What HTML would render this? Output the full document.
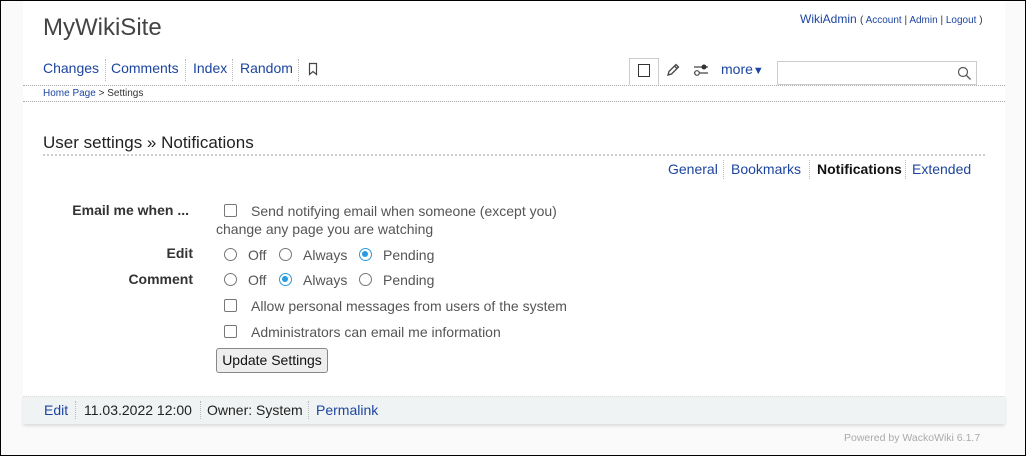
<!DOCTYPE html>
<html><head><meta charset="utf-8"><style>
*{margin:0;padding:0;box-sizing:border-box}
html,body{width:1026px;height:456px;overflow:hidden}
body{background:#fafafa;font-family:"Liberation Sans",Arial,sans-serif;position:relative;border:1px solid #000}
.a{position:absolute;white-space:nowrap}
.l{color:#1d45a0}
.panel{position:absolute;left:22px;top:0;width:982px;height:396px;background:#fff}
.foot{position:absolute;left:22px;top:395px;width:982px;height:28px;background:#f0f3f3;box-shadow:0 2px 3px rgba(0,0,0,.12);border-top:1px dotted #ddd}
.hd{position:absolute;left:22px;width:982px;border-top:1px dotted #aaa}
.sep{position:absolute;border-left:1px dotted #bbb}
.cb{position:absolute;width:13px;height:13px;border:1.5px solid #777;border-radius:2px;background:#fff}
.rb{position:absolute;width:13px;height:13px;border:1.5px solid #777;border-radius:50%;background:#fff}
.rb.on{border-color:#2a9ae0}
.rb.on:after{content:"";position:absolute;left:2px;top:2px;width:6px;height:6px;border-radius:50%;background:#2a9ae0}
.t{font-size:14px;color:#555}
.lab{font-size:14px;color:#333;font-weight:bold;text-align:right;width:150px}
</style></head><body>
<div class="panel"></div>
<div class="foot"></div>
<div class="a" style="left:42px;top:13px;font-size:24px;color:#444">MyWikiSite</div>
<div class="a" style="left:799px;top:11px;font-size:12px;color:#333"><span class="l">WikiAdmin</span> <span style="font-size:10px">( <span class="l">Account</span> | <span class="l">Admin</span> | <span class="l">Logout</span> )</span></div>
<div class="a l" style="left:42px;top:59px;font-size:14px">Changes</div>
<div class="sep" style="left:104px;top:58px;height:22px"></div>
<div class="a l" style="left:110px;top:59px;font-size:14px">Comments</div>
<div class="sep" style="left:184px;top:58px;height:22px"></div>
<div class="a l" style="left:192px;top:59px;font-size:14px">Index</div>
<div class="sep" style="left:231px;top:58px;height:22px"></div>
<div class="a l" style="left:239px;top:59px;font-size:14px">Random</div>
<div class="sep" style="left:297px;top:58px;height:22px"></div>
<svg class="a" style="left:306px;top:61px" width="12" height="14"><path d="M2.5 1.5h7v11l-3.5-3-3.5 3z" fill="none" stroke="#444" stroke-width="1.2"/></svg>
<div class="a" style="left:628px;top:57px;width:30px;height:27px;border:1px solid #ccc;border-bottom:none;background:#fff"></div>
<div class="a" style="left:637px;top:63px;width:12px;height:13px;border:1.3px solid #333"></div>
<svg class="a" style="left:664px;top:61px" width="16" height="16"><path d="M3 13l1-3.5 7-7 2.5 2.5-7 7z M9.5 4l2.5 2.5" fill="none" stroke="#444" stroke-width="1.3"/></svg>
<svg class="a" style="left:691px;top:61px" width="18" height="16"><path d="M2 5h14M2 11h14" stroke="#444" stroke-width="1.3"/><circle cx="12" cy="5" r="2.5" fill="#333"/><circle cx="5" cy="11" r="2.3" fill="#fff" stroke="#444" stroke-width="1.2"/></svg>
<div class="a l" style="left:720px;top:60px;font-size:14px">more<span style="font-size:11px">▼</span></div>
<div class="a" style="left:776px;top:60px;width:200px;height:24px;border:1px solid #ccc;background:#fff"></div>
<svg class="a" style="left:956px;top:65px" width="15" height="15"><circle cx="6" cy="6" r="4.5" fill="none" stroke="#555" stroke-width="1.2"/><path d="M9.5 9.5l4 4" stroke="#555" stroke-width="1.3"/></svg>
<div class="hd" style="top:84px"></div>
<div class="a" style="left:42px;top:87px;font-size:10px;color:#333"><span class="l">Home Page</span> &gt; Settings</div>
<div class="hd" style="top:100px"></div>
<div class="a" style="left:42px;top:132px;font-size:17px;color:#222">User settings » Notifications</div>
<div class="a" style="left:42px;top:153px;width:942px;border-top:2px dotted #ccc"></div>
<div class="a l" style="left:667px;top:160px;font-size:14px">General</div>
<div class="sep" style="left:722px;top:159px;height:19px"></div>
<div class="a l" style="left:730px;top:160px;font-size:14px">Bookmarks</div>
<div class="sep" style="left:808px;top:159px;height:19px"></div>
<div class="a" style="left:816px;top:160px;font-size:14px;font-weight:bold;color:#111">Notifications</div>
<div class="sep" style="left:904px;top:159px;height:19px"></div>
<div class="a l" style="left:911px;top:160px;font-size:14px">Extended</div>

<div class="a lab" style="left:38px;top:201px">Email me when ...</div>
<div class="cb" style="left:223px;top:203px"></div>
<div class="a t" style="left:250px;top:202px">Send notifying email when someone (except you)</div>
<div class="a t" style="left:215px;top:220px">change any page you are watching</div>
<div class="a lab" style="left:42px;top:244px">Edit</div>
<div class="rb" style="left:223px;top:247px"></div><div class="a t" style="left:247px;top:246px">Off</div>
<div class="rb" style="left:278px;top:247px"></div><div class="a t" style="left:302px;top:246px">Always</div>
<div class="rb on" style="left:358px;top:247px"></div><div class="a t" style="left:382px;top:246px">Pending</div>
<div class="a lab" style="left:42px;top:270px">Comment</div>
<div class="rb" style="left:223px;top:272px"></div><div class="a t" style="left:247px;top:271px">Off</div>
<div class="rb on" style="left:278px;top:272px"></div><div class="a t" style="left:302px;top:271px">Always</div>
<div class="rb" style="left:358px;top:272px"></div><div class="a t" style="left:382px;top:271px">Pending</div>
<div class="cb" style="left:223px;top:298px"></div>
<div class="a t" style="left:250px;top:297px">Allow personal messages from users of the system</div>
<div class="cb" style="left:223px;top:324px"></div>
<div class="a t" style="left:250px;top:323px">Administrators can email me information</div>
<div class="a" style="left:215px;top:347px;width:112px;height:25px;border:1px solid #888;border-radius:3px;background:#eee;font-size:14px;color:#111;text-align:center;line-height:23px">Update Settings</div>

<div class="a l" style="left:43px;top:401px;font-size:14px">Edit</div>
<div class="sep" style="left:74px;top:400px;height:18px"></div>
<div class="a" style="left:83px;top:401px;font-size:14px;color:#222">11.03.2022 12:00</div>
<div class="sep" style="left:199px;top:400px;height:18px"></div>
<div class="a" style="left:206px;top:401px;font-size:14px;color:#222">Owner: System</div>
<div class="sep" style="left:307px;top:400px;height:18px"></div>
<div class="a l" style="left:315px;top:401px;font-size:14px">Permalink</div>
<div class="a" style="left:843px;top:431px;font-size:10.5px;color:#aaa">Powered by WackoWiki 6.1.7</div>
</body></html>
